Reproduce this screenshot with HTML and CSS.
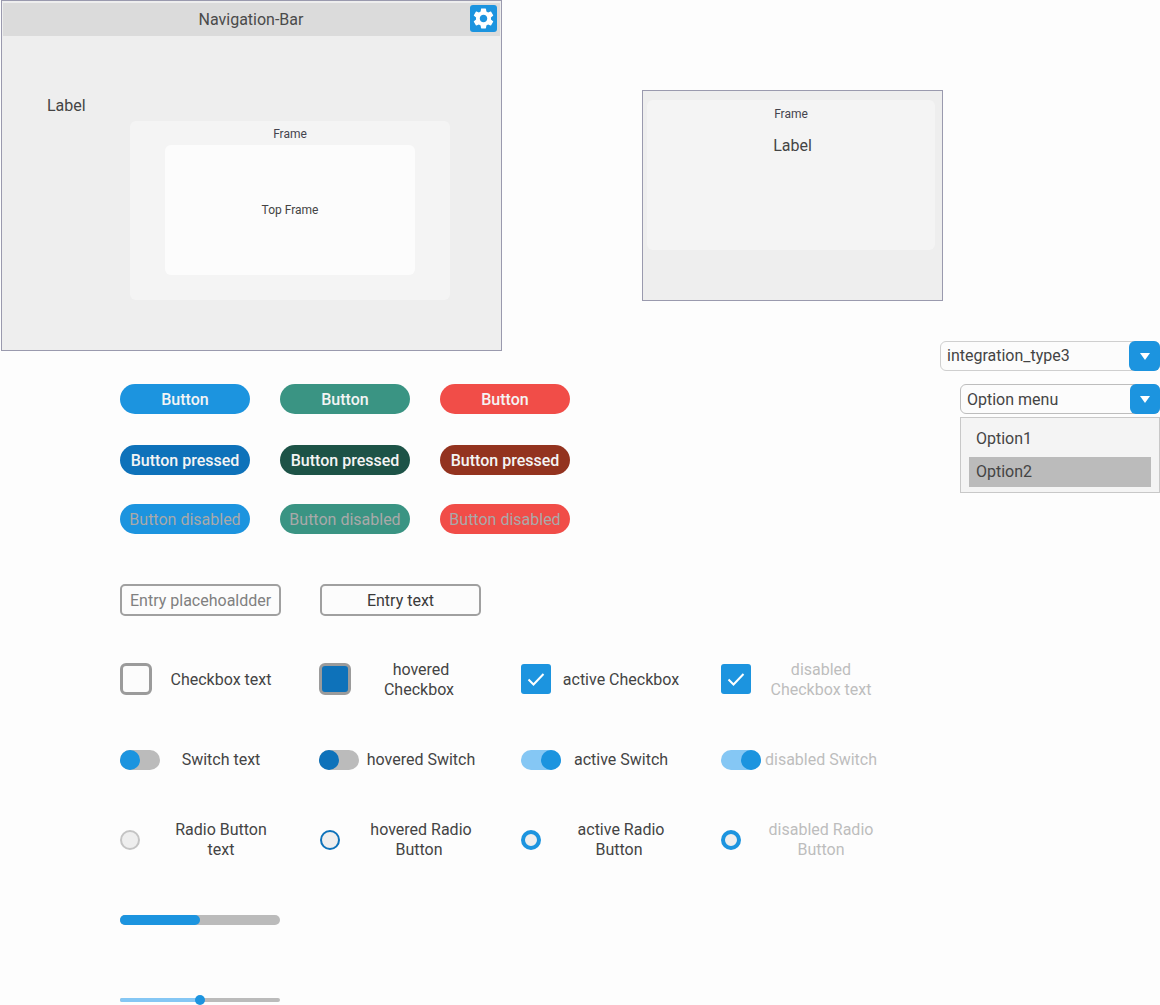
FILE: index.html
```html
<!DOCTYPE html>
<html lang="en">
<head>
<meta charset="utf-8">
<title>Widget gallery</title>
<link rel="stylesheet" href="styles.css">
</head>
<body>
<div class="page">
  <main class="left">
    <div class="top">
      <section class="window win-main">
        <header class="navbar">
          <span class="nav-title">Navigation-Bar</span>
          <span class="gear">
            <svg viewBox="0 0 24 24" width="25" height="25"><path fill="#fff" d="M19.14 12.94c.04-.3.06-.61.06-.94 0-.32-.02-.64-.07-.94l2.03-1.58a.49.49 0 0 0 .12-.61l-1.92-3.32a.488.488 0 0 0-.59-.22l-2.39.96c-.5-.38-1.03-.7-1.62-.94l-.36-2.54a.484.484 0 0 0-.48-.41h-3.84c-.24 0-.43.17-.47.41l-.36 2.54c-.59.24-1.13.57-1.62.94l-2.39-.96c-.22-.08-.47 0-.59.22L2.74 8.87c-.12.21-.08.47.12.61l2.03 1.58c-.05.3-.09.63-.09.94s.02.64.07.94l-2.03 1.58a.49.49 0 0 0-.12.61l1.92 3.32c.12.22.37.29.59.22l2.39-.96c.5.38 1.03.7 1.62.94l.36 2.54c.05.24.24.41.48.41h3.84c.24 0 .44-.17.47-.41l.36-2.54c.59-.24 1.13-.56 1.62-.94l2.39.96c.22.08.47 0 .59-.22l1.92-3.32c.12-.22.07-.47-.12-.61l-2.01-1.58zM12 15.6c-1.98 0-3.6-1.62-3.6-3.6s1.62-3.6 3.6-3.6 3.6 1.62 3.6 3.6-1.62 3.6-3.6 3.6z"/></svg>
          </span>
        </header>
        <div class="label label-main">Label</div>
        <div class="frame frame-main">
          <div class="frame-title">Frame</div>
          <div class="top-frame">Top Frame</div>
        </div>
      </section>
      <section class="window win-side">
        <div class="frame frame-side">
          <div class="frame-title">Frame</div>
          <div class="label label-side">Label</div>
        </div>
      </section>
    </div>

    <div class="gallery">
      <div class="buttons">
        <span class="btn blue">Button</span>
        <span class="btn green">Button</span>
        <span class="btn red">Button</span>
      </div>
      <div class="buttons row-pressed">
        <span class="btn blue-p">Button pressed</span>
        <span class="btn green-p">Button pressed</span>
        <span class="btn red-p">Button pressed</span>
      </div>
      <div class="buttons row-disabled">
        <span class="btn blue dis">Button disabled</span>
        <span class="btn green dis">Button disabled</span>
        <span class="btn red dis">Button disabled</span>
      </div>

      <div class="entries">
        <span class="entry placeholder">Entry placehoaldder</span>
        <span class="entry centered">Entry text</span>
      </div>

      <div class="controls row-check">
        <div class="item"><span class="check"></span><span class="txt">Checkbox text</span></div>
        <div class="item"><span class="check hovered"></span><span class="txt">hovered<br><span class="nudge">Checkbox</span></span></div>
        <div class="item"><span class="check on"><svg viewBox="0 0 30 30" width="30" height="30"><path d="M7.500 15.500l5 5 10-10.500" fill="none" stroke="#fff" stroke-width="2"/></svg></span><span class="txt">active Checkbox</span></div>
        <div class="item off"><span class="check on"><svg viewBox="0 0 30 30" width="30" height="30"><path d="M7.500 15.500l5 5 10-10.500" fill="none" stroke="#fff" stroke-width="2"/></svg></span><span class="txt">disabled<br>Checkbox text</span></div>
      </div>

      <div class="controls row-switch">
        <div class="item"><span class="switch"><i class="knob"></i></span><span class="txt">Switch text</span></div>
        <div class="item"><span class="switch hov"><i class="knob"></i></span><span class="txt">hovered Switch</span></div>
        <div class="item"><span class="switch act"><i class="knob"></i></span><span class="txt">active Switch</span></div>
        <div class="item off"><span class="switch act"><i class="knob"></i></span><span class="txt">disabled Switch</span></div>
      </div>

      <div class="controls row-radio">
        <div class="item"><span class="radio"></span><span class="txt">Radio Button<br>text</span></div>
        <div class="item"><span class="radio hov"></span><span class="txt">hovered Radio<br><span class="nudge">Button</span></span></div>
        <div class="item"><span class="radio act"></span><span class="txt">active Radio<br><span class="nudge">Button</span></span></div>
        <div class="item off"><span class="radio act"></span><span class="txt">disabled Radio<br>Button</span></div>
      </div>

      <div class="progress"><i class="fill"></i></div>
      <div class="slider"><i class="slider-fill"></i><i class="thumb"></i></div>
    </div>
  </main>

  <aside class="right">
    <div class="combo combo-wide"><span class="combo-text">integration_type3</span><span class="arrow"></span></div>
    <div class="menu-block">
      <div class="combo combo-menu"><span class="combo-text">Option menu</span><span class="arrow"></span></div>
      <div class="dropdown">
        <div class="opt">Option1</div>
        <div class="opt sel">Option2</div>
      </div>
    </div>
  </aside>
</div>
</body>
</html>
```
FILE: styles.css
```css
* { box-sizing: border-box; }
html, body { margin: 0; padding: 0; }
body {
  background: #fdfdfd;
  font-family: Roboto, "Liberation Sans", sans-serif;
  color: #444;
  width: 1160px;
  height: 1005px;
  overflow: hidden;
}
.page { display: flex; width: 1160px; }
.left { width: 940px; flex: none; }
.right {
  width: 220px;
  flex: none;
  padding-top: 341px;
  display: flex;
  flex-direction: column;
  align-items: flex-end;
}

/* windows */
.top { display: flex; align-items: flex-start; margin-left: 1px; }
.window { background: #eeeeee; border: 1px solid #9a9aae; flex: none; }
.win-main { width: 501px; height: 351px; padding: 2px 1px 0 1px; }
.win-side { width: 301px; height: 211px; margin: 90px 0 0 140px; padding: 9px 6px 0 4px; }

.navbar {
  height: 33px;
  background: #dbdbdb;
  display: flex;
  align-items: center;
  justify-content: center;
  position: relative;
}
.nav-title { font-size: 16px; color: #4a4a4a; margin-left: -1px; }
.gear {
  position: absolute;
  right: 3px;
  top: 2px;
  width: 27px;
  height: 27px;
  background: #1c94df;
  border-radius: 3px;
  display: flex;
  align-items: center;
  justify-content: center;
}
.label { font-size: 16px; line-height: 20px; color: #444; }
.label-main { margin: 60px 0 0 44px; }
.label-side { text-align: center; margin: 14px 0 0 3px; }

.frame { background: #f4f4f4; border-radius: 6px; }
.frame-main {
  width: 320px;
  height: 179px;
  margin: 5px 0 0 127px;
  padding-top: 5px;
}
.frame-side { width: 288px; height: 150px; padding-top: 6px; }
.frame-title { font-size: 12px; line-height: 16px; text-align: center; color: #44444e; }
.top-frame {
  width: 250px;
  height: 130px;
  margin: 3px 0 0 35px;
  background: #fcfcfc;
  border-radius: 6px;
  font-size: 12px;
  color: #444;
  display: flex;
  align-items: center;
  justify-content: center;
}

/* gallery */
.gallery { padding-left: 120px; }
.buttons { display: flex; gap: 30px; }
.buttons:first-child { margin-top: 33px; }
.row-pressed { margin-top: 31px; }
.row-disabled { margin-top: 29px; }
.btn {
  width: 130px;
  height: 30px;
  border-radius: 15px;
  color: #f4f4f4;
  font-size: 16px;
  font-weight: 500;
  display: flex;
  align-items: center;
  justify-content: center;
  white-space: nowrap;
}
.blue { background: #1c94df; }
.green { background: #3a9483; }
.red { background: #f14d48; }
.blue-p { background: #0e72ba; }
.green-p { background: #1d5347; }
.red-p { background: #93331f; }
.btn.dis { color: #a9a9a9; font-weight: 400; }

.entries { display: flex; gap: 39px; margin-top: 50px; }
.entry {
  width: 161px;
  height: 32px;
  border: 2px solid #a0a0a0;
  border-radius: 5px;
  font-size: 16px;
  display: flex;
  align-items: center;
  white-space: nowrap;
  background: #fcfcfc;
}
.placeholder { color: #808080; padding-left: 8px; }
.centered { justify-content: center; color: #3a3a3a; }

.controls { display: grid; grid-template-columns: 200px 200px 200px 200px; }
.item { display: flex; align-items: center; font-size: 16px; line-height: 20px; color: #444; }
.item.off .txt { color: #bdbdbd; }
.txt { text-align: center; flex: 1; max-width: 120px; white-space: nowrap; }
.nudge { display: inline-block; margin-right: 4px; }

.row-check { margin-top: 47px; height: 32px; align-items: center; }
.row-check .item { height: 32px; }
.check {
  width: 32px;
  height: 32px;
  border: 3px solid #9b9b9b;
  border-radius: 6px;
  flex: none;
  background: #fcfcfc;
}
.check.hovered { background: #0e72ba; margin-left: -1px; margin-right: 1px; }
.check.on {
  width: 30px;
  height: 30px;
  margin-left: 1px;
  margin-right: 1px;
  border: none;
  background: #1c94df;
  border-radius: 3px;
}
.check svg { display: block; }
.row-check .txt { width: 120px; flex: none; margin-left: 9px; padding-top: 2px; }

.row-switch { margin-top: 49px; height: 32px; }
.row-switch .item { height: 32px; }
.switch {
  width: 40px;
  height: 20px;
  margin-right: 1px;
  border-radius: 10px;
  background: #bbbbbb;
  flex: none;
  display: flex;
}
.knob { width: 20px; height: 20px; border-radius: 50%; background: #1c94df; display: block; }
.switch.hov { margin-left: -1px; margin-right: 2px; }
.switch.hov .knob { background: #0e72ba; }
.switch.act { background: #85c7f4; justify-content: flex-end; margin-left: 1px; margin-right: 0; }
.row-switch .txt { width: 120px; flex: none; }

.row-radio { margin-top: 44px; height: 40px; }
.row-radio .item { height: 40px; }
.radio {
  width: 20px;
  height: 20px;
  border-radius: 50%;
  border: 2px solid #c4c4c4;
  background: #eeeeee;
  flex: none;
  margin-right: 21px;
}
.radio.hov { border-color: #0e72ba; }
.radio.act { border: 4.500px solid #1c94df; margin-left: 1px; margin-right: 20px; }
.row-radio .txt { width: 120px; flex: none; }

.progress {
  width: 160px;
  height: 10px;
  margin-top: 55px;
  background: #bbbbbb;
  border-radius: 5px;
  display: flex;
}
.fill { width: 80px; background: #1c94df; border-radius: 5px; display: block; }
.slider {
  width: 160px;
  height: 4px;
  margin-top: 73px;
  background: #bbbbbb;
  border-radius: 2px;
  position: relative;
  display: flex;
}
.slider-fill { width: 80px; background: #85c7f4; border-radius: 2px; display: block; }
.thumb {
  position: absolute;
  left: 75px;
  top: -3px;
  width: 10px;
  height: 10px;
  border-radius: 50%;
  background: #1c94df;
}

/* combos */
.combo {
  height: 30px;
  border: 1px solid #bdbdbd;
  border-radius: 6px;
  display: flex;
  align-items: center;
  justify-content: space-between;
  background: #fcfcfc;
  font-size: 16px;
  position: relative;
}
.combo-wide { width: 220px; border-color: #cfcfcf; }
.combo-wide .combo-text { margin-top: -2px; }
.menu-block { width: 200px; margin-top: 13px; }
.combo-menu { width: 200px; }
.combo-text { padding-left: 6px; color: #444; }
.arrow {
  position: absolute;
  right: -1px;
  top: -1px;
  width: 30px;
  height: 30px;
  background: #1c94df;
  border-radius: 6px;
  display: flex;
  align-items: center;
  justify-content: center;
}
.arrow::after {
  content: "";
  width: 0;
  height: 0;
  border-left: 5px solid transparent;
  border-right: 5px solid transparent;
  border-top: 7px solid #fff;
}
.combo-wide .arrow { width: 31px; }
.dropdown {
  margin-top: 3px;
  height: 76px;
  background: #f4f4f4;
  border: 1px solid #c8c8c8;
  padding: 6px 8px;
}
.opt { height: 30px; padding-left: 7px; font-size: 16px; line-height: 30px; color: #444; }
.opt + .opt { margin-top: 3px; }
.sel { background: #bbbbbb; }
```
